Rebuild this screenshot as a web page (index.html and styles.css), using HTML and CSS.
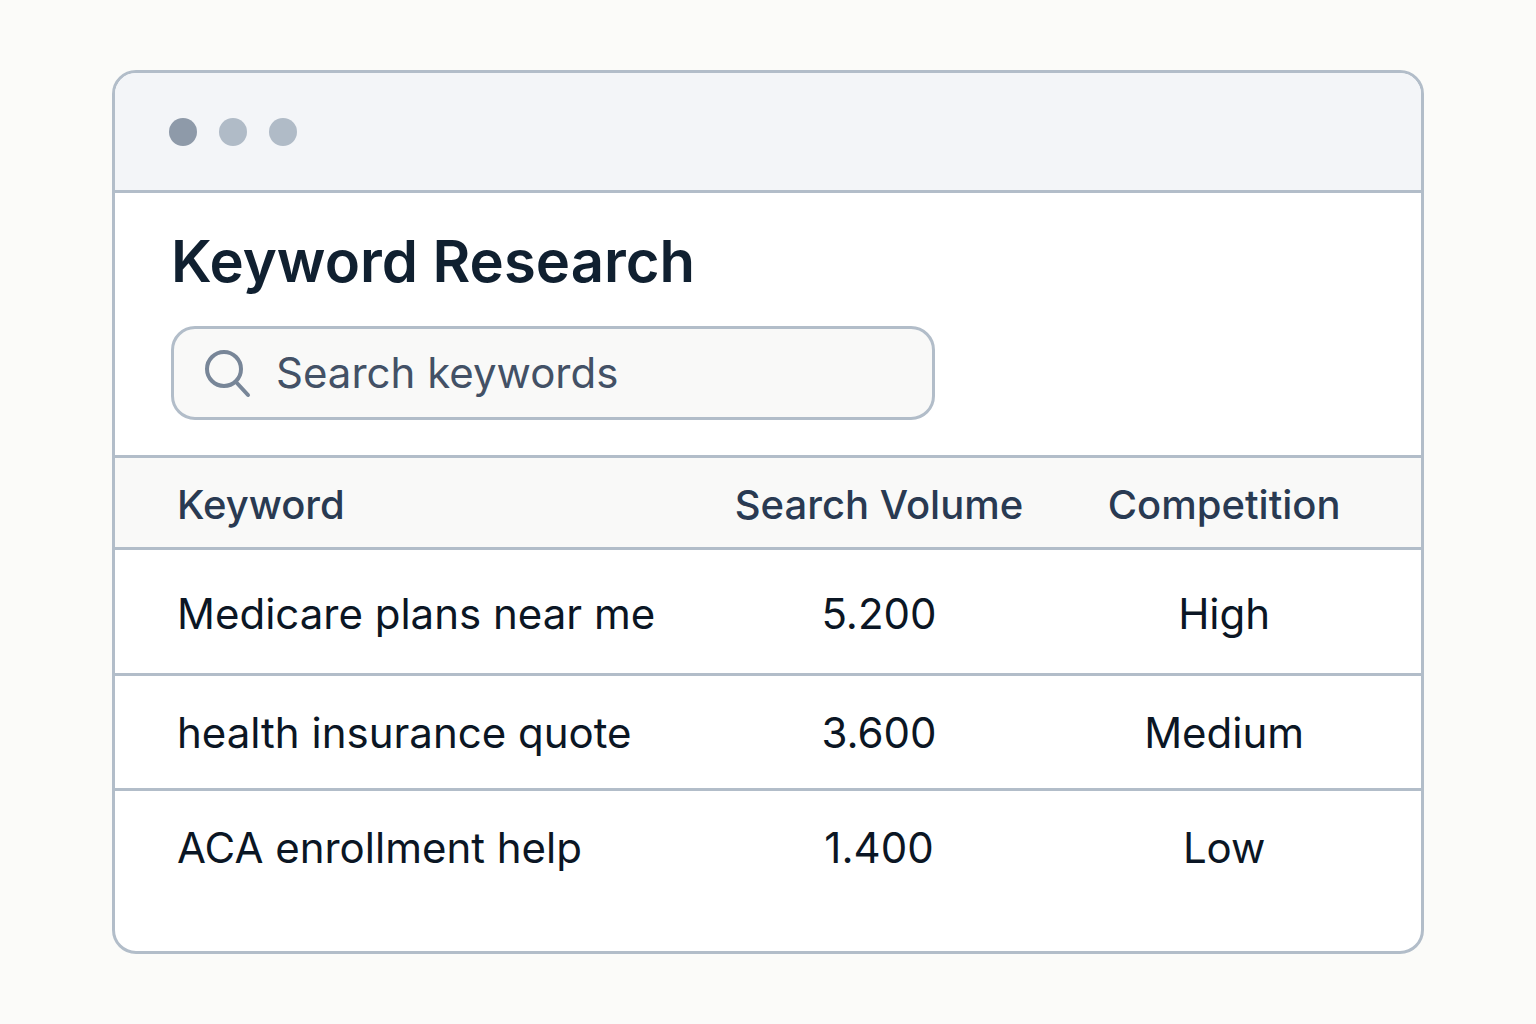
FILE: index.html
```
<!DOCTYPE html>
<html lang="en">
<head>
    <meta charset="UTF-8">
    <meta name="viewport" content="width=device-width, initial-scale=1.0">
    <title>Keyword Research</title>
    <link rel="stylesheet" href="styles.css">
</head>
<body>
    <main class="window">
        <div class="title-bar">
            <span class="dot dot-active"></span>
            <span class="dot"></span>
            <span class="dot"></span>
        </div>

        <section class="search-panel">
            <h1>Keyword Research</h1>
            <label class="search-box">
                <svg class="search-icon" viewBox="0 0 48 50" fill="none" stroke="currentColor" stroke-linecap="round" aria-hidden="true">
                    <circle cx="20" cy="21" r="17" stroke-width="4"/>
                    <path d="M32 34L44 47" stroke-width="4"/>
                </svg>
                <input type="search" placeholder="Search keywords" aria-label="Search keywords">
            </label>
        </section>

        <table class="keyword-table">
            <thead>
                <tr>
                    <th scope="col" class="col-keyword">Keyword</th>
                    <th scope="col" class="col-volume">Search Volume</th>
                    <th scope="col" class="col-competition">Competition</th>
                </tr>
            </thead>
            <tbody>
                <tr>
                    <td>Medicare plans near me</td>
                    <td>5.200</td>
                    <td>High</td>
                </tr>
                <tr>
                    <td>health insurance quote</td>
                    <td>3.600</td>
                    <td>Medium</td>
                </tr>
                <tr>
                    <td>ACA enrollment help</td>
                    <td>1.400</td>
                    <td>Low</td>
                </tr>
            </tbody>
        </table>
    </main>
</body>
</html>
```
FILE: styles.css
```
:root {
    --page: #fbfbf9;
    --line: #b2bdc9;
    --bar: #f3f5f8;
    --field: #f9f9f8;
    --ink: #0b1624;
    --heading: #102030;
    --label: #293a52;
    --muted: #435166;
    --icon: #788698;
}

* {
    margin: 0;
    padding: 0;
    box-sizing: border-box;
}

body {
    min-height: 100vh;
    padding: 70px 112px;
    background: var(--page);
    color: var(--ink);
    font-family: Inter, "Liberation Sans", sans-serif;
    font-size: 42px;
    line-height: 52px;
}

.window {
    background: #fff;
    border: 3px solid var(--line);
    border-radius: 24px;
    overflow: hidden;
    padding-bottom: 48px;
}

.title-bar {
    display: flex;
    gap: 22px;
    padding: 45px 54px 44px;
    background: var(--bar);
    border-bottom: 3px solid var(--line);
}

.dot {
    width: 28px;
    height: 28px;
    border-radius: 50%;
    background: #b0bbc7;
}

.dot-active {
    background: #8e9aa9;
}

.search-panel {
    padding: 30px 56px 35px;
}

h1 {
    margin-bottom: 27px;
    color: var(--heading);
    font-size: 58px;
    font-weight: 600;
    line-height: 76px;
}

.search-box {
    display: flex;
    align-items: center;
    gap: 24px;
    width: 64%;
    padding: 18px 30px;
    background: var(--field);
    border: 3px solid var(--line);
    border-radius: 24px;
    color: var(--icon);
}

.search-icon {
    flex: none;
    width: 48px;
    height: 50px;
}

.search-box input {
    flex: 1;
    min-width: 0;
    height: 52px;
    border: none;
    outline: none;
    background: transparent;
    color: var(--muted);
    font: inherit;
}

.search-box input::placeholder {
    color: var(--muted);
    opacity: 1;
}

.keyword-table {
    width: 100%;
    table-layout: fixed;
    border-collapse: separate;
    border-spacing: 0;
    text-align: center;
}

.keyword-table th {
    padding: 21px 0 16px;
    background: var(--field);
    border-top: 3px solid var(--line);
    border-bottom: 3px solid var(--line);
    color: var(--label);
    font-size: 40px;
    font-weight: 500;
}

.keyword-table td {
    padding: 38px 0 33px;
}

.keyword-table tbody tr + tr td {
    padding: 31px 0 29px;
    border-top: 3px solid var(--line);
}

.keyword-table tr th:first-child,
.keyword-table tbody tr td:first-child {
    padding-left: 62px;
    text-align: left;
}

.keyword-table tr th:last-child,
.keyword-table tbody tr td:last-child {
    padding-right: 28px;
}

.keyword-table tbody tr + tr td:first-child {
    padding-left: 62px;
}

.keyword-table tbody tr + tr td:last-child {
    padding-right: 28px;
}

.col-keyword {
    width: 45%;
}

.col-volume {
    width: 27%;
}

.col-competition {
    width: 28%;
}
```
